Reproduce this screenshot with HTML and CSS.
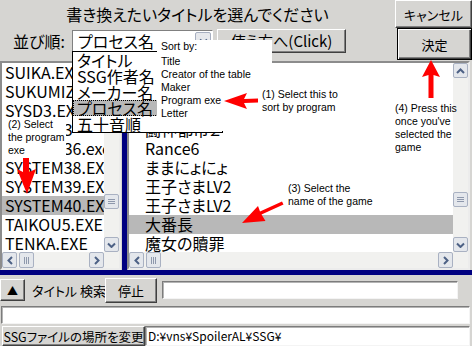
FILE: index.html
```html
<!DOCTYPE html>
<html lang="ja">
<head>
    <meta charset="UTF-8">
    <title>タイトル選択</title>
    <link rel="stylesheet" href="styles.css">
</head>
<body>
    <div class="window">
        <div class="top">
            <div class="top-main">
                <div class="heading">書き換えたいタイトルを選んでください</div>
                <div class="sort-row">
                    <span class="sort-label">並び順:</span>
                    <div class="combo">
                        <span class="combo-text">プロセス名</span>
                        <span class="combo-btn">
                            <svg width="9" height="6" viewBox="0 0 9 6"><path d="M1 1.5 L4.5 5 L8 1.5" fill="none" stroke="#4d6185" stroke-width="2"/></svg>
                        </span>
                    </div>
                    <button class="btn toggle">使う方へ(Click)</button>
                </div>
            </div>
            <div class="top-buttons">
                <button class="btn cancel">キャンセル</button>
                <button class="btn ok">決定</button>
            </div>
        </div>

        <div class="lists">
            <div class="list list-left">
                <ul class="items">
                    <li>SUIKA.EXE</li>
                    <li>SUKUMIZU.EXE</li>
                    <li>SYSD3.EXE</li>
                    <li>SYSTEM3</li>
                    <li>SYSTEM36.exe</li>
                    <li>SYSTEM38.EXE</li>
                    <li>SYSTEM39.EXE</li>
                    <li class="selected">SYSTEM40.EXE</li>
                    <li>TAIKOU5.EXE</li>
                    <li>TENKA.EXE</li>
                </ul>
                <div class="vscroll">
                    <span class="sb-btn"><svg width="9" height="6" viewBox="0 0 9 6"><path d="M1 5 L4.5 1.5 L8 5" fill="none" stroke="#4d6185" stroke-width="2"/></svg></span>
                    <span class="sb-track"><span class="sb-btn sb-thumb"><svg width="7" height="7" viewBox="0 0 7 7"><path d="M0 1.5h7M0 3.5h7M0 5.5h7" stroke="#8e98ac"/></svg></span></span>
                    <span class="sb-btn"><svg width="9" height="6" viewBox="0 0 9 6"><path d="M1 1.5 L4.5 5 L8 1.5" fill="none" stroke="#4d6185" stroke-width="2"/></svg></span>
                </div>
                <div class="hscroll">
                    <span class="sb-btn"><svg width="6" height="9" viewBox="0 0 6 9"><path d="M5 1 L1.5 4.5 L5 8" fill="none" stroke="#4d6185" stroke-width="2"/></svg></span>
                    <span class="sb-track"><span class="sb-btn sb-thumb"><svg width="7" height="7" viewBox="0 0 7 7"><path d="M1.5 0v7M3.5 0v7M5.5 0v7" stroke="#8e98ac"/></svg></span></span>
                    <span class="sb-btn"><svg width="6" height="9" viewBox="0 0 6 9"><path d="M1 1 L4.5 4.5 L1 8" fill="none" stroke="#4d6185" stroke-width="2"/></svg></span>
                </div>
                <div class="corner"></div>
            </div>
            <div class="split-v"></div>
            <div class="list list-right">
                <ul class="items">
                    <li>鬼作</li>
                    <li>臭作</li>
                    <li>遺作</li>
                    <li>闘神都市２</li>
                    <li>Rance6</li>
                    <li>ままにょにょ</li>
                    <li>王子さまLV2</li>
                    <li>王子さまLV2</li>
                    <li class="selected">大番長</li>
                    <li>魔女の贖罪</li>
                </ul>
                <div class="vscroll">
                    <span class="sb-btn"><svg width="9" height="6" viewBox="0 0 9 6"><path d="M1 5 L4.5 1.5 L8 5" fill="none" stroke="#4d6185" stroke-width="2"/></svg></span>
                    <span class="sb-track"><span class="sb-btn sb-thumb"><svg width="7" height="7" viewBox="0 0 7 7"><path d="M0 1.5h7M0 3.5h7M0 5.5h7" stroke="#8e98ac"/></svg></span></span>
                    <span class="sb-btn"><svg width="9" height="6" viewBox="0 0 9 6"><path d="M1 1.5 L4.5 5 L8 1.5" fill="none" stroke="#4d6185" stroke-width="2"/></svg></span>
                </div>
                <div class="hscroll">
                    <span class="sb-btn"><svg width="6" height="9" viewBox="0 0 6 9"><path d="M5 1 L1.5 4.5 L5 8" fill="none" stroke="#4d6185" stroke-width="2"/></svg></span>
                    <span class="sb-track"><span class="sb-btn sb-thumb"><svg width="7" height="7" viewBox="0 0 7 7"><path d="M1.5 0v7M3.5 0v7M5.5 0v7" stroke="#8e98ac"/></svg></span></span>
                    <span class="sb-btn"><svg width="6" height="9" viewBox="0 0 6 9"><path d="M1 1 L4.5 4.5 L1 8" fill="none" stroke="#4d6185" stroke-width="2"/></svg></span>
                </div>
                <div class="corner"></div>
            </div>
        </div>
        <div class="split-h"></div>

        <div class="search-row">
            <button class="btn up-btn">▲</button>
            <span class="search-label">タイトル 検索</span>
            <button class="btn stop">停止</button>
            <div class="field search-field"></div>
        </div>
        <div class="wide-row">
            <div class="field wide-field"></div>
        </div>
        <div class="path-row">
            <button class="btn path-btn">SSGファイルの場所を変更</button>
            <div class="field path-field">D:¥vns¥SpoilerAL¥SSG¥</div>
        </div>

        <!-- 開いている並び順リスト -->
        <ul class="dropdown">
            <li>タイトル</li>
            <li>SSG作者名</li>
            <li>メーカー名</li>
            <li class="current">プロセス名</li>
            <li>五十音順</li>
        </ul>

        <!-- 説明書き -->
        <div class="note note-sort">
            <p class="note-head">Sort by:</p>
            <p>Title</p>
            <p>Creator of the table</p>
            <p>Maker</p>
            <p>Program exe</p>
            <p>Letter</p>
        </div>
        <div class="note note-1"><p>(1) Select this to</p><p>sort by program</p></div>
        <div class="note note-2"><p>(2) Select</p><p>the program</p><p>exe</p></div>
        <div class="note note-3"><p>(3) Select the</p><p>name of the game</p></div>
        <div class="note note-4"><p>(4) Press this</p><p>once you've</p><p>selected the</p><p>game</p></div>

        <svg class="arrows" width="472" height="346" viewBox="0 0 472 346">
            <polygon points="224,101 247,93 244,99 258,98.5 258,102.5 244,103 247,109"/>
            <polygon points="23,158 29,158 29,172 36,169 27,194 17,169 23,172"/>
            <polygon points="242,223 258,206 260,211.5 282,201.5 283.5,204.5 261.5,214.5 265.5,221"/>
            <polygon points="431,60 440,77 433.5,75 433.5,98 428.5,98 428.5,75 422,77"/>
        </svg>
    </div>
</body>
</html>
```

FILE: styles.css
```css
* {
    margin: 0;
    padding: 0;
    box-sizing: border-box;
}
body {
    background-color: #d6d5d2;
}
.window {
    position: relative;
    width: 472px;
    height: 346px;
    overflow: hidden;
    background-color: #d6d5d2;
    font-family: "Noto Sans CJK JP", "Noto Sans", sans-serif;
    font-feature-settings: "palt";
    color: #000;
}
.top {
    display: flex;
    height: 61px;
}
.top-main {
    width: 395px;
}
.heading {
    height: 28px;
    line-height: 28px;
    text-align: center;
    font-size: 16px;
}
.sort-row {
    display: flex;
    align-items: center;
    height: 25px;
    padding-left: 13px;
}
.sort-label {
    width: 59px;
    font-size: 16px;
}
.combo {
    display: flex;
    width: 141px;
    height: 22px;
    background-color: #fff;
    border: 1px solid;
    border-color: #808080 #fff #fff #808080;
}
.combo-text {
    flex: 1;
    font-size: 16px;
    line-height: 20px;
    padding-left: 5px;
}
.combo-btn {
    display: flex;
    align-items: center;
    justify-content: center;
    width: 16px;
    margin: 1px;
    background-color: #e6e8ec;
    border: 1px solid #a7afc0;
    border-radius: 2px;
}
.btn {
    padding: 0;
    font-family: inherit;
    font-feature-settings: inherit;
    font-size: 13px;
    color: #000;
    background-color: #d6d5d2;
    border: 1px solid;
    border-color: #fff #404040 #404040 #fff;
    box-shadow: inset -1px -1px #808080;
    white-space: nowrap;
    cursor: default;
}
.toggle {
    margin-left: 4px;
    width: 129px;
    height: 24px;
    font-size: 15px;
    overflow: hidden;
}
.top-buttons {
    display: flex;
    flex-direction: column;
    width: 77px;
}
.cancel {
    height: 28px;
}
.ok {
    height: 32px;
    margin-left: 2px;
    border: 1px solid #000;
    box-shadow: inset 1px 1px #fff, inset -1px -1px #404040, inset -2px -2px #808080;
}

/* リスト */
.lists {
    display: flex;
    height: 209px;
}
.list {
    display: grid;
    grid-template-columns: 1fr 15px;
    grid-template-rows: 1fr 16px;
    background-color: #fff;
    border: 2px solid;
    border-color: #8c8c8c #ececec #ececec #8c8c8c;
}
.list-left {
    width: 121px;
}
.split-v {
    width: 5px;
    margin-left: 1px;
    background-color: #000080;
}
.list-right {
    width: 343px;
}
.items {
    list-style: none;
    overflow: hidden;
    font-size: 16px;
    line-height: 19px;
}
.items li {
    height: 19px;
    padding-left: 3px;
    white-space: nowrap;
}
.list-right .items li {
    padding-left: 16px;
}
.items .selected {
    background-color: #b8b8b8;
}
.vscroll {
    display: flex;
    flex-direction: column;
    background-color: #f1f1ef;
}
.hscroll {
    display: flex;
    background-color: #f1f1ef;
}
.corner {
    background-color: #f1f1ef;
}
.sb-track {
    flex: 1;
    display: flex;
}
.vscroll .sb-track {
    flex-direction: column;
}
.sb-btn {
    display: flex;
    align-items: center;
    justify-content: center;
    width: 15px;
    height: 15px;
    flex-shrink: 0;
    background-color: #e4e7ec;
    border: 1px solid #a9b1c2;
    border-radius: 2px;
}
.list-left .vscroll .sb-thumb {
    margin-top: 116px;
}
.list-right .vscroll .sb-thumb {
    margin-top: 114px;
}
.hscroll .sb-thumb {
    margin-left: 2px;
}
.hscroll .sb-btn {
    height: 16px;
}
.split-h {
    height: 5px;
    background-color: #000080;
}

/* 下部 */
.search-row {
    display: flex;
    align-items: center;
    height: 30px;
}
.up-btn {
    width: 25px;
    height: 22px;
    font-size: 11px;
}
.search-label {
    margin-left: 7px;
    width: 73px;
    font-size: 13px;
    white-space: nowrap;
}
.stop {
    width: 52px;
    height: 25px;
}
.field {
    background-color: #fff;
    border: 1px solid;
    border-color: #7c7c7c #f4f4f4 #f4f4f4 #7c7c7c;
    box-shadow: inset 1px 1px #b4b4b4;
}
.search-field {
    margin-left: 5px;
    width: 296px;
    height: 18px;
}
.wide-row {
    height: 20px;
    padding: 1px 2px 1px 1px;
}
.wide-field {
    height: 18px;
}
.path-row {
    display: flex;
    height: 21px;
    padding: 1px 2px 0 2px;
}
.path-btn {
    width: 143px;
    height: 20px;
    font-size: 12.5px;
}
.path-field {
    flex: 1;
    height: 20px;
    padding-left: 2px;
    font-size: 12px;
    line-height: 18px;
}

/* ドロップダウン */
.dropdown {
    position: absolute;
    left: 72px;
    top: 51px;
    width: 151px;
    list-style: none;
    background-color: #fff;
    border: 1px solid #000;
    font-size: 16px;
}
.dropdown li {
    height: 16px;
    line-height: 16px;
    padding-left: 4px;
    white-space: nowrap;
}
.dropdown .current {
    background-color: #b8b8b8;
    outline: 1px dotted #000;
    outline-offset: -1px;
}

/* 注釈 */
.note {
    position: absolute;
    font-family: "Liberation Sans", Arial, sans-serif;
    font-feature-settings: normal;
    font-size: 10.5px;
    line-height: 13px;
    white-space: nowrap;
}
.note-sort {
    left: 157px;
    top: 40px;
    width: 115px;
    height: 91px;
    padding-left: 4px;
    background-color: #fff;
}
.note-head {
    margin-bottom: 2px;
}
.note-1 {
    left: 262px;
    top: 88px;
}
.note-2 {
    left: 2px;
    top: 118px;
    width: 64px;
    height: 40px;
    padding-left: 6px;
    background-color: #fff;
}
.note-3 {
    left: 288px;
    top: 182px;
}
.note-4 {
    left: 395px;
    top: 102px;
}
.arrows {
    position: absolute;
    left: 0;
    top: 0;
    fill: #ff0000;
    pointer-events: none;
}
```
